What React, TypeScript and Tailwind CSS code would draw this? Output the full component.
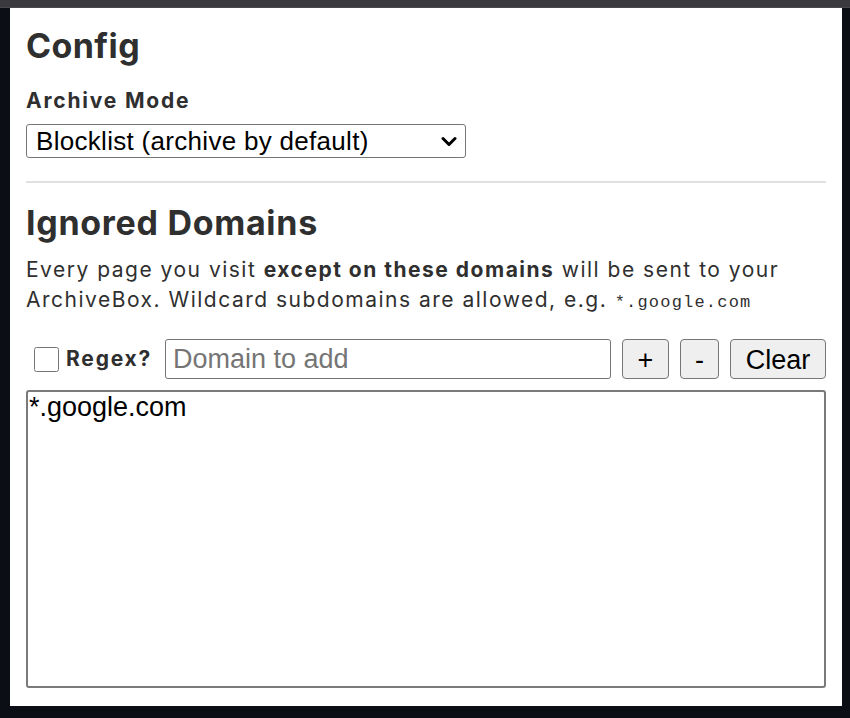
import { useState } from "react";

export default function App() {
  const [mode, setMode] = useState("blocklist");
  const [regex, setRegex] = useState(false);
  const [domain, setDomain] = useState("");
  const [list, setList] = useState("*.google.com");

  const addDomain = () => {
    if (!domain.trim()) return;
    setList((l) => (l ? l + "\n" : "") + domain.trim());
    setDomain("");
  };

  const removeDomain = () => {
    setList((l) =>
      l
        .split("\n")
        .filter((d) => d !== domain.trim())
        .join("\n")
    );
  };

  return (
    <div className="w-[850px] h-[718px] bg-[#0b0e14] overflow-hidden">
      {/* barra superior de la ventana */}
      <div className="h-[8px] bg-[#3a3a3e] border-b border-[#4a4a4e]" />

      <div className="ml-[10px] w-[832px] h-[698px] bg-white px-4 pt-[18px] text-[#2f2f2f] font-['Inter',sans-serif]">
        <h1 className="text-[34px] font-bold leading-[40px] tracking-[0.4px]">Config</h1>

        <label className="block mt-[22px] text-[21px] font-bold leading-[26px] tracking-[1.8px]">
          Archive Mode
        </label>
        <div className="relative mt-[10px] w-[440px]">
          <select
            value={mode}
            onChange={(e) => setMode(e.target.value)}
            className="appearance-none block w-[440px] h-[34px] border border-[#767676] rounded-[3px] pl-[9px] text-[26px] leading-[32px] text-black font-['Liberation_Sans',Arial,sans-serif] tracking-[0.3px] bg-white"
          >
            <option value="blocklist">Blocklist (archive by default)</option>
            <option value="allowlist">Allowlist (ignore by default)</option>
          </select>
          <svg
            className="absolute right-[9px] top-[12px] pointer-events-none"
            width="16"
            height="11"
            viewBox="0 0 16 11"
          >
            <path
              d="M2 2.5 L8 8.5 L14 2.5"
              fill="none"
              stroke="#000"
              strokeWidth="3"
              strokeLinecap="round"
              strokeLinejoin="round"
            />
          </svg>
        </div>

        <hr className="mt-[23px] border-t-2 border-[#e0e0e0]" />

        <h2 className="mt-[20px] text-[34px] font-bold leading-[40px] tracking-[0.7px]">
          Ignored Domains
        </h2>
        <p className="mt-[12px] text-[21px] leading-[30px] tracking-[1.5px] max-w-[790px]">
          Every page you visit <b>except on these domains</b> will be sent to
          your ArchiveBox. Wildcard subdomains are allowed, e.g.{" "}
          <code className="text-[17px] tracking-[1.2px] font-['Liberation_Mono',monospace]">
            *.google.com
          </code>
        </p>

        <div className="mt-[21px] flex items-center">
          <label className="w-[127px] flex items-center gap-[7px] pl-[8px] text-[21px] font-bold tracking-[1.8px]">
            <input
              type="checkbox"
              checked={regex}
              onChange={(e) => setRegex(e.target.checked)}
              className="w-[25px] h-[25px] m-0 accent-gray-600"
            />
            Regex?
          </label>
          <input
            value={domain}
            onChange={(e) => setDomain(e.target.value)}
            placeholder="Domain to add"
            className="ml-[12px] w-[446px] h-[40px] border border-[#767676] rounded-[3px] px-[7px] text-[27px] text-black placeholder:text-[#757575] font-['Liberation_Sans',Arial,sans-serif]"
          />
          <button
            onClick={addDomain}
            className="ml-[11px] w-[47px] h-[40px] bg-[#efefef] border border-[#767676] rounded-[4px] text-[27px] text-black font-['Liberation_Sans',Arial,sans-serif]"
          >
            +
          </button>
          <button
            onClick={removeDomain}
            className="ml-[11px] w-[39px] h-[40px] bg-[#efefef] border border-[#767676] rounded-[4px] text-[27px] text-black font-['Liberation_Sans',Arial,sans-serif]"
          >
            -
          </button>
          <button
            onClick={() => setList("")}
            className="ml-[11px] w-[96px] h-[40px] bg-[#efefef] border border-[#767676] rounded-[4px] text-[27px] text-black font-['Liberation_Sans',Arial,sans-serif]"
          >
            Clear
          </button>
        </div>

        <textarea
          value={list}
          onChange={(e) => setList(e.target.value)}
          className="mt-[11px] block w-[800px] h-[298px] border-2 border-[#7a7a7a] rounded-[3px] px-[1px] py-0 text-[27px] leading-[30px] text-black font-['Liberation_Sans',Arial,sans-serif] resize-none"
        />
      </div>
    </div>
  );
}
